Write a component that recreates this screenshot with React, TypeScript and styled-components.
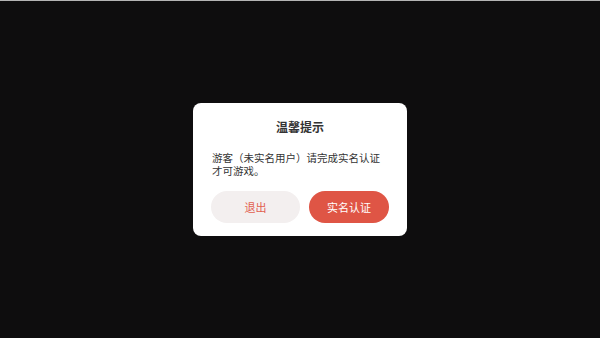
import React from 'react';
import styled, { createGlobalStyle } from 'styled-components';

const GlobalStyle = createGlobalStyle`
  html, body {
    margin: 0;
    padding: 0;
    background: #0e0d0e;
  }
  body {
    font-family: 'Noto Sans CJK SC', 'Noto Sans', sans-serif;
  }
`;

function App() {
  return (
    <>
      <GlobalStyle />
      <Screen>
        <Dialog>
          <Title>温馨提示</Title>
          <Message>游客（未实名用户）请完成实名认证才可游戏。</Message>
          <Actions>
            <ActionBtn $variant='ghost' $width={89}>
              退出
            </ActionBtn>
            <ActionBtn $variant='primary' $width={80}>
              实名认证
            </ActionBtn>
          </Actions>
        </Dialog>
      </Screen>
    </>
  );
}

const Screen = styled.div`
  width: 600px;
  height: 338px;
  box-sizing: border-box;
  border-top: 1px solid #b4b4b4;
  background-color: #0e0d0e;
  display: flex;
  align-items: center;
  justify-content: center;
`;

const Dialog = styled.div`
  width: 214px;
  box-sizing: border-box;
  padding: 16px 18px 13px;
  background-color: #ffffff;
  border-radius: 8px;
  display: flex;
  flex-direction: column;
`;

const Title = styled.h3`
  margin: 0;
  font-size: 12px;
  line-height: 16px;
  font-weight: 700;
  color: #333333;
  text-align: center;
`;

const Message = styled.p`
  margin: 17px 1px 0;
  font-size: 10.5px;
  line-height: 12.5px;
  color: #333333;
`;

const Actions = styled.div`
  margin-top: 14px;
  display: flex;
  justify-content: space-between;
`;

const ActionBtn = styled.button<{ $variant: 'ghost' | 'primary'; $width: number }>`
  width: ${p => p.$width}px;
  height: 32px;
  border: 0;
  border-radius: 16px;
  padding: 0;
  font-family: inherit;
  font-size: 11px;
  cursor: pointer;
  background-color: ${p => (p.$variant === 'primary' ? '#df5545' : '#f3efef')};
  color: ${p => (p.$variant === 'primary' ? '#ffffff' : '#e2604f')};
`;

export default App;
